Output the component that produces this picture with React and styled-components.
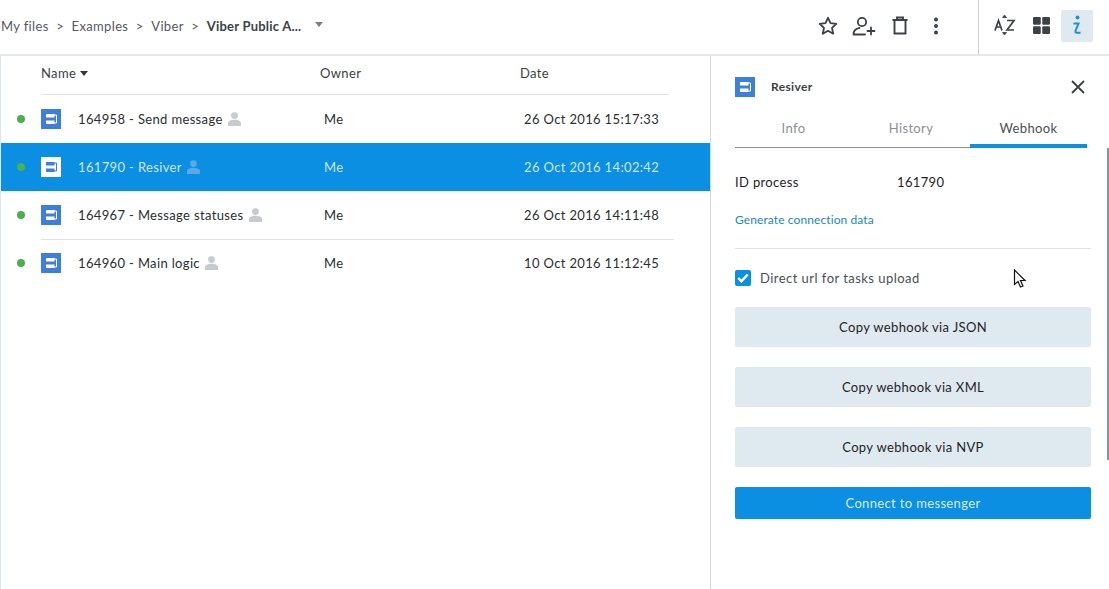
import React from 'react'
import styled, { createGlobalStyle } from 'styled-components'

const GlobalStyle = createGlobalStyle`
  html, body { margin: 0; padding: 0; height: 100%; background: #fff; overflow: hidden; }
  body { font-family: "Lato", "Open Sans", sans-serif; font-size: 13px; color: #1f2326; }
  * { box-sizing: border-box; }
`

const processes = [
  { id: 164958, title: 'Send message', date: '26 Oct 2016 15:17:33' },
  { id: 161790, title: 'Resiver', date: '26 Oct 2016 14:02:42', selected: true },
  { id: 164967, title: 'Message statuses', date: '26 Oct 2016 14:11:48', ruled: true },
  { id: 164960, title: 'Main logic', date: '10 Oct 2016 11:12:45' },
]

const Page = styled.div`
  position: relative;
  width: 1109px;
  height: 589px;
  overflow: hidden;
  letter-spacing: 0.35px;
`
const TopBar = styled.header`
  display: flex;
  align-items: center;
  height: 56px;
  border-bottom: 2px solid #e6e8ea;
`
const Crumbs = styled.nav`
  display: flex;
  align-items: center;
  flex: 1;
  padding: 0 0 2px 1px;
  color: #54595e;
`
const Sep = styled.span`
  margin: 0 7.5px;
`
const CurrentCrumb = styled.b`
  color: #3c4146;
  font-weight: 700;
  letter-spacing: 0.22px;
`
const Caret = styled.span`
  width: 0;
  height: 0;
  margin-left: 14px;
  margin-top: -3px;
  border-left: 4.5px solid transparent;
  border-right: 4.5px solid transparent;
  border-top: 5px solid #7b8086;
`
const SortCaret = styled(Caret)`
  margin: 0;
  border-top-color: #33373b;
`
const ActionGroup = styled.div`
  display: flex;
  align-items: center;
  gap: 8px;
  height: 100%;
  padding-right: 28px;
`
const ViewGroup = styled.div`
  display: flex;
  align-items: center;
  gap: 4px;
  height: 100%;
  padding: 0 16px 2px 10px;
  border-left: 1px solid #c9cdd0;
`
const IconBox = styled.div`
  display: flex;
  align-items: center;
  justify-content: center;
  width: 28px;
  height: 32px;
  padding-bottom: 2px;
  color: #3c4146;
`
const ViewBox = styled(IconBox)`
  width: 32px;
  border-radius: 2px;
  background: ${p => (p.$active ? '#dfe9f0' : 'transparent')};
`
const Main = styled.main`
  display: flex;
  height: 533px;
`
const ListPane = styled.section`
  width: 711px;
  border-left: 1px solid #dbe6ec;
  border-right: 1px solid #d5d9dc;
`
const Columns = styled.div`
  display: grid;
  grid-template-columns: 279px 200px 1fr;
  align-items: center;
  width: 628px;
  height: 39px;
  margin: 0 40px;
  padding-bottom: 4px;
  border-bottom: 1px solid #dfe3e6;
  color: #3a3f44;
`
const NameHead = styled.span`
  display: flex;
  align-items: center;
  gap: 4px;
`
const Row = styled.div`
  position: relative;
  display: grid;
  grid-template-columns: 40px 37px 246px 200px 1fr;
  align-items: center;
  height: 48px;
  color: ${p => (p.$selected ? '#cfe6fa' : '#2a2e32')};
  background: ${p => (p.$selected ? '#0a8fe3' : 'transparent')};
  &::after {
    content: '';
    display: ${p => (p.$ruled ? 'block' : 'none')};
    position: absolute;
    left: 40px;
    width: 633px;
    bottom: -1px;
    border-bottom: 1px solid #dfe3e6;
  }
`
const Status = styled.span`
  width: 8px;
  height: 8px;
  margin-left: 16px;
  border-radius: 50%;
  background: #4caf50;
`
const ProcessIcon = styled.span`
  display: flex;
`
const NameCell = styled.span`
  display: flex;
  align-items: center;
  gap: 5px;
`
const SidePane = styled.aside`
  flex: 1;
  padding: 0 18px 0 24px;
`
const SideHead = styled.div`
  display: flex;
  align-items: center;
  gap: 16px;
  height: 61px;
  font-size: 12px;
  font-weight: 700;
  color: #3a3f44;
`
const SideTitle = styled.span`
  flex: 1;
`
const Close = styled.span`
  display: flex;
  margin-right: 6px;
`
const Tabs = styled.div`
  display: grid;
  grid-template-columns: 117px 118px 117px;
  width: 352px;
  height: 31px;
  border-bottom: 1px solid #8a8f94;
`
const Tab = styled.div`
  height: 31px;
  padding-top: 3px;
  text-align: center;
  color: ${p => (p.$active ? '#4a4f54' : '#8b9095')};
  border-bottom: ${p => (p.$active ? '4px solid #0a8fe3' : 'none')};
`
const IdRow = styled.div`
  display: flex;
  height: 16px;
  margin-top: 26px;
  line-height: 16px;
`
const IdLabel = styled.span`
  width: 162px;
`
const GenerateLink = styled.a`
  display: block;
  height: 16px;
  margin-top: 22px;
  font-size: 12px;
  line-height: 16px;
  letter-spacing: 0.1px;
  color: #1a86bd;
`
const Divider = styled.div`
  margin-top: 20px;
  border-top: 1px solid #dfe3e6;
`
const CheckRow = styled.label`
  display: flex;
  align-items: center;
  gap: 9px;
  margin-top: 21px;
  letter-spacing: 0.46px;
  color: #4a4f54;
`
const CheckBox = styled.span`
  display: flex;
  align-items: center;
  justify-content: center;
  width: 16px;
  height: 16px;
  border-radius: 2px;
  background: #0a8fe3;
`
const Buttons = styled.div`
  display: flex;
  flex-direction: column;
  gap: 20px;
  margin-top: 21px;
`
const Button = styled.button`
  height: ${p => (p.$primary ? '32px' : '40px')};
  border: 0;
  border-radius: 2px;
  font: inherit;
  letter-spacing: inherit;
  color: ${p => (p.$primary ? '#d8eefc' : '#1f2326')};
  background: ${p => (p.$primary ? '#0a8fe3' : '#dfe9f0')};
`
const ScrollThumb = styled.div`
  position: absolute;
  top: 148px;
  right: 0;
  width: 2px;
  height: 312px;
  background: #8c9196;
`
const Pointer = styled.svg`
  position: absolute;
  left: 1013px;
  top: 269px;
`

const Star = () => (
  <svg width="20" height="20" viewBox="0 0 20 20" fill="none" stroke="currentColor" strokeWidth="1.8" strokeLinejoin="round">
    <path d="M10 1.800l2.500 5.400 5.800.7-4.300 4 1.200 5.800-5.200-2.900-5.200 2.900 1.200-5.800-4.300-4 5.800-.7z" />
  </svg>
)
const UserPlus = () => (
  <svg width="24" height="20" viewBox="0 0 24 20" fill="none" stroke="currentColor" strokeWidth="1.8" strokeLinecap="round">
    <circle cx="10" cy="6" r="4.200" />
    <path d="M1.500 18.500c0-4 2.600-6 6-6.600M1.500 18.500H13M19 11.500v7M15.500 15h7" />
  </svg>
)
const Trash = () => (
  <svg width="18" height="20" viewBox="0 0 18 20" fill="none" stroke="currentColor" strokeWidth="1.9">
    <path d="M1.500 4h15M6 4V1.500h6V4M3.500 4v13.500h11V4" />
  </svg>
)
const Dots = () => (
  <svg width="6" height="18" viewBox="0 0 6 18" fill="currentColor">
    <circle cx="3" cy="2.500" r="2" />
    <circle cx="3" cy="9" r="2" />
    <circle cx="3" cy="15.500" r="2" />
  </svg>
)
const SortAz = () => (
  <svg width="22" height="22" viewBox="0 0 22 22" fill="none" stroke="currentColor" strokeWidth="1.7">
    <path d="M1 16.500L4.500 6.500 8 16.500M2.200 13h4.600M13 6.500h7L13 16h7" />
    <path d="M8.500 3.500L10.500 1l2 2.500zM8.500 18.500h4L10.500 21z" fill="currentColor" strokeWidth="0.8" />
  </svg>
)
const Grid = () => (
  <svg width="17" height="17" viewBox="0 0 16 16" fill="currentColor">
    <rect width="7.300" height="7.300" rx="1.200" />
    <rect x="8.700" width="7.300" height="7.300" rx="1.200" />
    <rect y="8.700" width="7.300" height="7.300" rx="1.200" />
    <rect x="8.700" y="8.700" width="7.300" height="7.300" rx="1.200" />
  </svg>
)
const InfoMark = () => (
  <svg width="10" height="20" viewBox="0 0 10 20" fill="none" stroke="#1a8fdc" strokeWidth="2">
    <circle cx="5.500" cy="2.500" r="1.900" fill="#1a8fdc" stroke="none" />
    <path d="M1.500 8.500H6.500L3.500 16Q3.200 17.800 5 17.800H8.500" />
  </svg>
)
const ProcessGlyph = ({ inverted }) => {
  const bg = inverted ? '#fff' : '#3f7fdc'
  const fg = inverted ? '#3f7fdc' : '#fff'
  return (
    <svg width="20" height="20" viewBox="0 0 20 20">
      <rect width="20" height="20" fill={bg} />
      <path d="M5 5h8.500v3.500H5zM5 11.500h8.500V15H5z" fill={fg} />
      <path d="M12.500 6h3v8h-3" fill="none" stroke={fg} strokeWidth="1" />
    </svg>
  )
}
const Person = ({ color }) => (
  <svg width="13" height="14" viewBox="0 0 13 14" fill={color}>
    <circle cx="6.500" cy="3.600" r="3.400" />
    <path d="M0 14v-2.500C0 9 2.600 7.800 6.500 7.800S13 9 13 11.500V14z" />
  </svg>
)

export default function App() {
  return (
    <Page>
      <GlobalStyle />
      <TopBar>
        <Crumbs>
          My files<Sep>&gt;</Sep>Examples<Sep>&gt;</Sep>Viber<Sep>&gt;</Sep>
          <CurrentCrumb>Viber Public A...</CurrentCrumb>
          <Caret />
        </Crumbs>
        <ActionGroup>
          <IconBox><Star /></IconBox>
          <IconBox><UserPlus /></IconBox>
          <IconBox><Trash /></IconBox>
          <IconBox><Dots /></IconBox>
        </ActionGroup>
        <ViewGroup>
          <ViewBox><SortAz /></ViewBox>
          <ViewBox><Grid /></ViewBox>
          <ViewBox $active><InfoMark /></ViewBox>
        </ViewGroup>
      </TopBar>
      <Main>
        <ListPane>
          <Columns>
            <NameHead>Name <SortCaret /></NameHead>
            <span>Owner</span>
            <span>Date</span>
          </Columns>
          {processes.map(p => (
            <Row key={p.id} $selected={p.selected} $ruled={p.ruled}>
              <Status />
              <ProcessIcon><ProcessGlyph inverted={p.selected} /></ProcessIcon>
              <NameCell>
                {p.id} - {p.title}
                <Person color={p.selected ? '#5aa9e8' : '#c5cbd0'} />
              </NameCell>
              <span>Me</span>
              <span>{p.date}</span>
            </Row>
          ))}
        </ListPane>
        <SidePane>
          <SideHead>
            <ProcessGlyph />
            <SideTitle>Resiver</SideTitle>
            <Close>
              <svg width="14" height="14" viewBox="0 0 14 14" stroke="#3c4146" strokeWidth="1.8">
                <path d="M1 1l12 12M13 1L1 13" />
              </svg>
            </Close>
          </SideHead>
          <Tabs>
            <Tab>Info</Tab>
            <Tab>History</Tab>
            <Tab $active>Webhook</Tab>
          </Tabs>
          <IdRow><IdLabel>ID process</IdLabel><span>161790</span></IdRow>
          <GenerateLink>Generate connection data</GenerateLink>
          <Divider />
          <CheckRow>
            <CheckBox>
              <svg width="12" height="10" viewBox="0 0 12 10" fill="none" stroke="#fff" strokeWidth="2.400">
                <path d="M1.200 5l3.200 3.200L10.800 1.500" />
              </svg>
            </CheckBox>
            Direct url for tasks upload
          </CheckRow>
          <Buttons>
            <Button>Copy webhook via JSON</Button>
            <Button>Copy webhook via XML</Button>
            <Button>Copy webhook via NVP</Button>
            <Button $primary>Connect to messenger</Button>
          </Buttons>
        </SidePane>
      </Main>
      <ScrollThumb />
      <Pointer width="14" height="20" viewBox="0 0 14 20" fill="#fff" stroke="#111" strokeWidth="1.2">
        <path d="M1.500 1v14.500l3.500-3 2.500 5.500 2.500-1-2.500-5.500h4.500z" />
      </Pointer>
    </Page>
  )
}
